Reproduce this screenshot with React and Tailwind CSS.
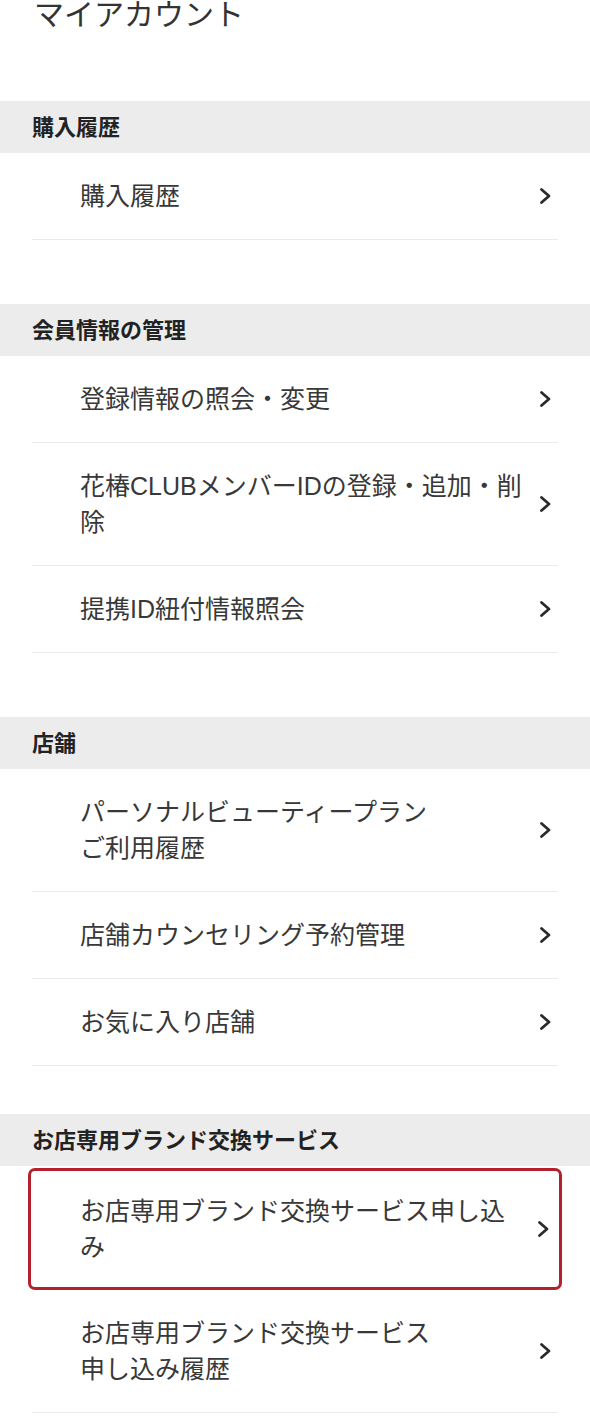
const sections = [
  { title: '購入履歴', items: [['購入履歴']], gap: 'mt-[69px]' },
  {
    title: '会員情報の管理',
    items: [
      ['登録情報の照会・変更'],
      ['花椿CLUBメンバーIDの登録・追加・削', '除'],
      ['提携ID紐付情報照会'],
    ],
    gap: 'mt-[64px]',
  },
  {
    title: '店舗',
    items: [
      ['パーソナルビューティープラン', 'ご利用履歴'],
      ['店舗カウンセリング予約管理'],
      ['お気に入り店舗'],
    ],
    gap: 'mt-[64px]',
  },
  {
    title: 'お店専用ブランド交換サービス',
    items: [
      ['お店専用ブランド交換サービス申し込', 'み'],
      ['お店専用ブランド交換サービス', '申し込み履歴'],
    ],
    focused: 0,
    gap: 'mt-[48px]',
  },
];

const Chevron = () => (
  <svg width="14" height="20" viewBox="0 0 14 20" className="shrink-0">
    <polyline points="3.5,3.5 11,10 3.5,16.5" fill="none" stroke="#2b2b2b" strokeWidth="2.8" strokeLinecap="round" strokeLinejoin="round" />
  </svg>
);

const Item = ({ lines, focused }) => {
  if (focused) {
    return (
      <div className="mx-[-4px] mt-[2px] flex items-center justify-between rounded-[7px] border-[3px] border-[#b5202d] py-[22px] pl-[49px] pr-[9px]">
        <div className="text-[25px] leading-[36px] text-[#383838]">
          {lines.map((l, i) => <div key={i}>{l}</div>)}
        </div>
        <Chevron />
      </div>
    );
  }
  return (
    <div className="flex items-center justify-between border-b border-[#ebebeb] py-[25px] pl-[48px] pr-[6px]">
      <div className="text-[25px] leading-[36px] text-[#383838]">
        {lines.map((l, i) => <div key={i}>{l}</div>)}
      </div>
      <Chevron />
    </div>
  );
};

export default function App() {
  return (
    <div className="w-[590px] bg-white pb-[20px]" style={{ fontFamily: '"Liberation Sans", "Noto Sans CJK JP", sans-serif' }}>
      <h1 className="mt-[-2px] pl-[34px] text-[30px] leading-[34px] font-normal text-[#333]">マイアカウント</h1>
      {sections.map((s) => (
        <section key={s.title} className={s.gap}>
          <div className="flex h-[52px] items-center bg-[#ececec] pl-[32px] text-[22px] font-bold text-[#222]">{s.title}</div>
          <div className="px-[32px]">
            {s.items.map((lines, i) => (
              <Item key={i} lines={lines} focused={s.focused === i} />
            ))}
          </div>
        </section>
      ))}
    </div>
  );
}
